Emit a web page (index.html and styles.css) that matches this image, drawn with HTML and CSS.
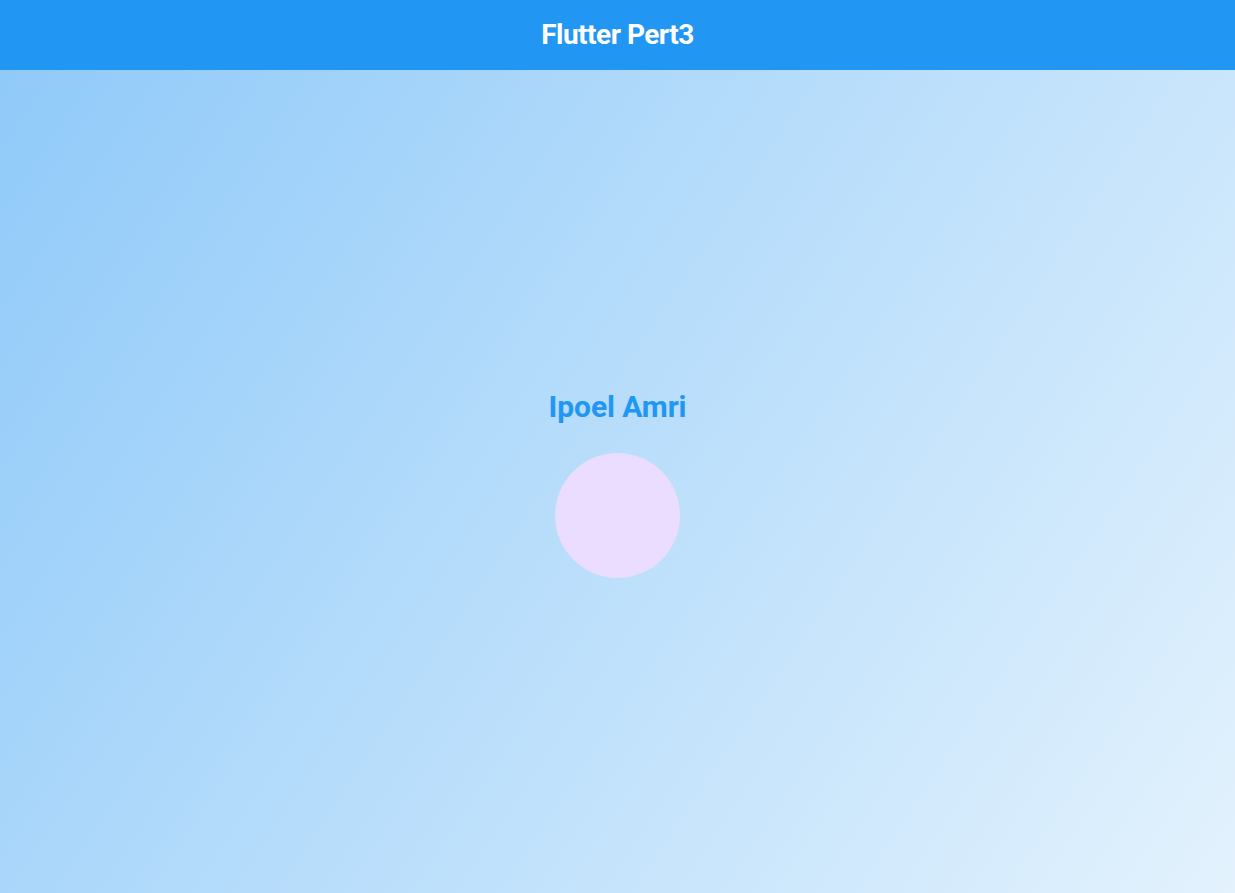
FILE: index.html
```html
<!DOCTYPE html>
<html>
<head>
<meta charset="utf-8">
<link rel="stylesheet" href="styles.css">
</head>
<body>
<div class="app">
  <header class="appbar"><h1 class="title">Flutter Pert3</h1></header>
  <main class="body">
    <div class="column">
      <div class="name">Ipoel Amri</div>
      <div class="avatar"></div>
    </div>
  </main>
</div>
</body>
</html>
```
FILE: styles.css
```css
html, body { margin: 0; padding: 0; height: 100%; }
body { font-family: Roboto, "Noto Sans", sans-serif; }
.app { display: flex; flex-direction: column; height: 100vh; }
.appbar {
  height: 70px; flex: none; background: #2196F3;
  display: flex; align-items: center; justify-content: center;
}
.title { margin: 0; color: #fff; font-size: 28px; font-weight: 700; line-height: 1; letter-spacing: -0.5px; }
.body {
  flex: 1; display: flex; align-items: center; justify-content: center;
  padding-top: 2px;
  background: linear-gradient(123.68deg, #90CAF9 0%, #E3F2FD 100%);
}
.column { display: flex; flex-direction: column; align-items: center; gap: 26px; }
.name { color: #2196F3; font-size: 30px; font-weight: 700; line-height: 40px; letter-spacing: -0.1px; }
.avatar { width: 125px; height: 125px; border-radius: 50%; background: #EADDFF; }
```
